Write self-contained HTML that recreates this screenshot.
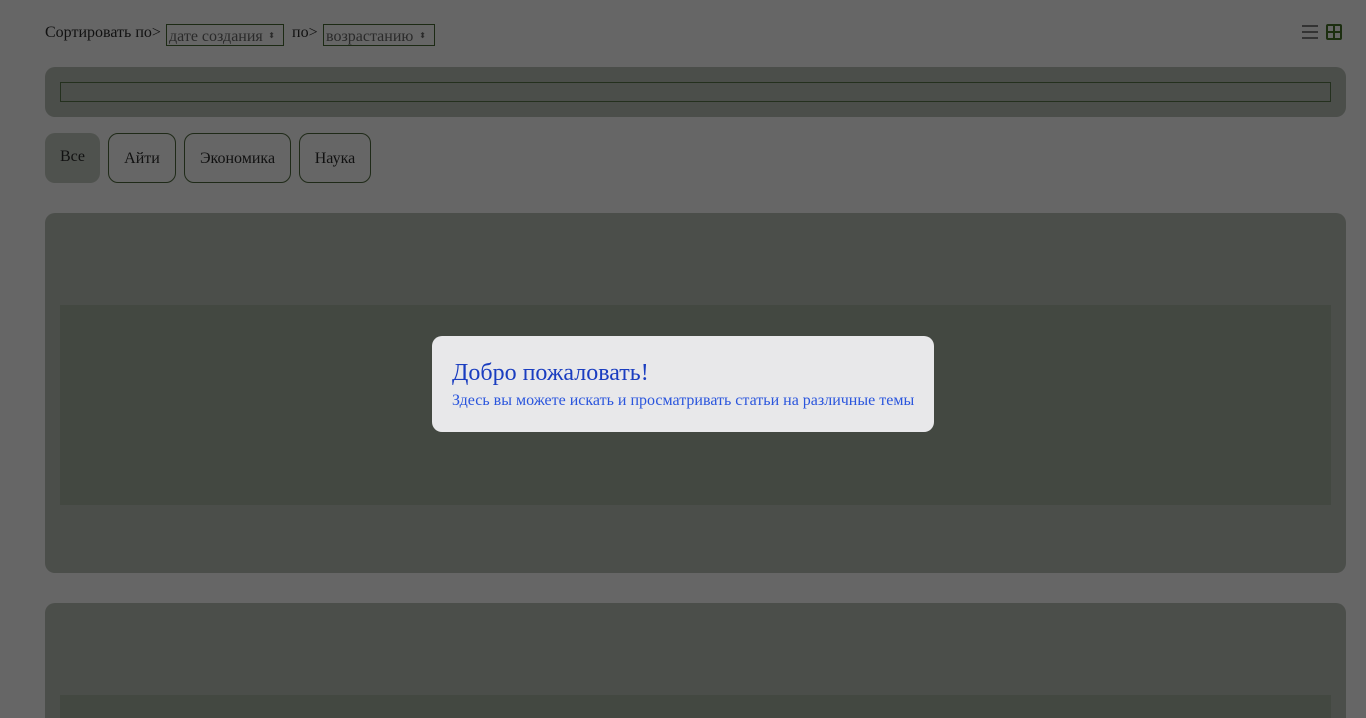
<!DOCTYPE html>
<html style="overflow:hidden;height:718px"><head><meta charset="utf-8"><style>
body{margin:0;width:1366px;height:718px;overflow:hidden;background:#666;font-family:"Liberation Serif",serif;color:#111;position:relative}
.a{position:absolute}
.sel{position:absolute;border:1px solid #1c2a14;height:22px;top:24px;font-size:16px;color:#2a2a2a;line-height:24px;padding-left:2px;box-sizing:border-box}
.sel span{position:absolute;right:8px;top:0;font-size:8px;line-height:22px}
.card{position:absolute;left:45px;width:1301px;background:#4b4e4a;border-radius:10px}
.btn{position:absolute;top:133px;height:50px;border:1px solid #1f2a18;border-radius:10px;box-sizing:border-box;font-size:16px;line-height:50px;text-align:center}
</style></head><body>
<div class="a" style="left:45px;top:24px;font-size:16px">Сортировать по&gt;</div>
<div class="sel" style="left:166px;width:118px">дате создания<span>⬍</span></div>
<div class="a" style="left:292px;top:24px;font-size:16px">по&gt;</div>
<div class="sel" style="left:323px;width:112px">возрастанию<span>⬍</span></div>
<svg class="a" style="left:1300px;top:24px" width="44" height="18">
<g stroke="#333" stroke-width="2"><line x1="2" y1="2" x2="18" y2="2"/><line x1="2" y1="8" x2="18" y2="8"/><line x1="2" y1="14" x2="18" y2="14"/></g>
<g stroke="#1c2e10" stroke-width="2" fill="none"><rect x="27" y="1" width="14" height="14" rx="1"/><line x1="34" y1="1" x2="34" y2="15"/><line x1="27" y1="8" x2="41" y2="8"/></g>
</svg>
<div class="card" style="top:67px;height:50px"></div>
<div class="a" style="left:60px;top:82px;width:1271px;height:20px;border:1px solid #24301e;box-sizing:border-box"></div>
<div class="btn" style="left:45px;width:55px;background:#4f524e;border:none;line-height:48px">Все</div>
<div class="btn" style="left:108px;width:68px">Айти</div>
<div class="btn" style="left:184px;width:107px">Экономика</div>
<div class="btn" style="left:299px;width:72px">Наука</div>
<div class="card" style="top:213px;height:360px"></div>
<div class="a" style="left:60px;top:305px;width:1271px;height:200px;background:#434841"></div>
<div class="card" style="top:603px;height:130px"></div>
<div class="a" style="left:60px;top:695px;width:1271px;height:30px;background:#434841"></div>
<div class="a" style="left:432px;top:336px;width:502px;height:96px;background:#e8e8ea;border-radius:10px"></div>
<div class="a" style="left:452px;top:360px;font-size:24px;color:#1a3dc0">Добро пожаловать!</div>
<div class="a" style="left:452px;top:392px;font-size:16px;color:#2a55dd">Здесь вы можете искать и просматривать статьи на различные темы</div>
</body></html>
